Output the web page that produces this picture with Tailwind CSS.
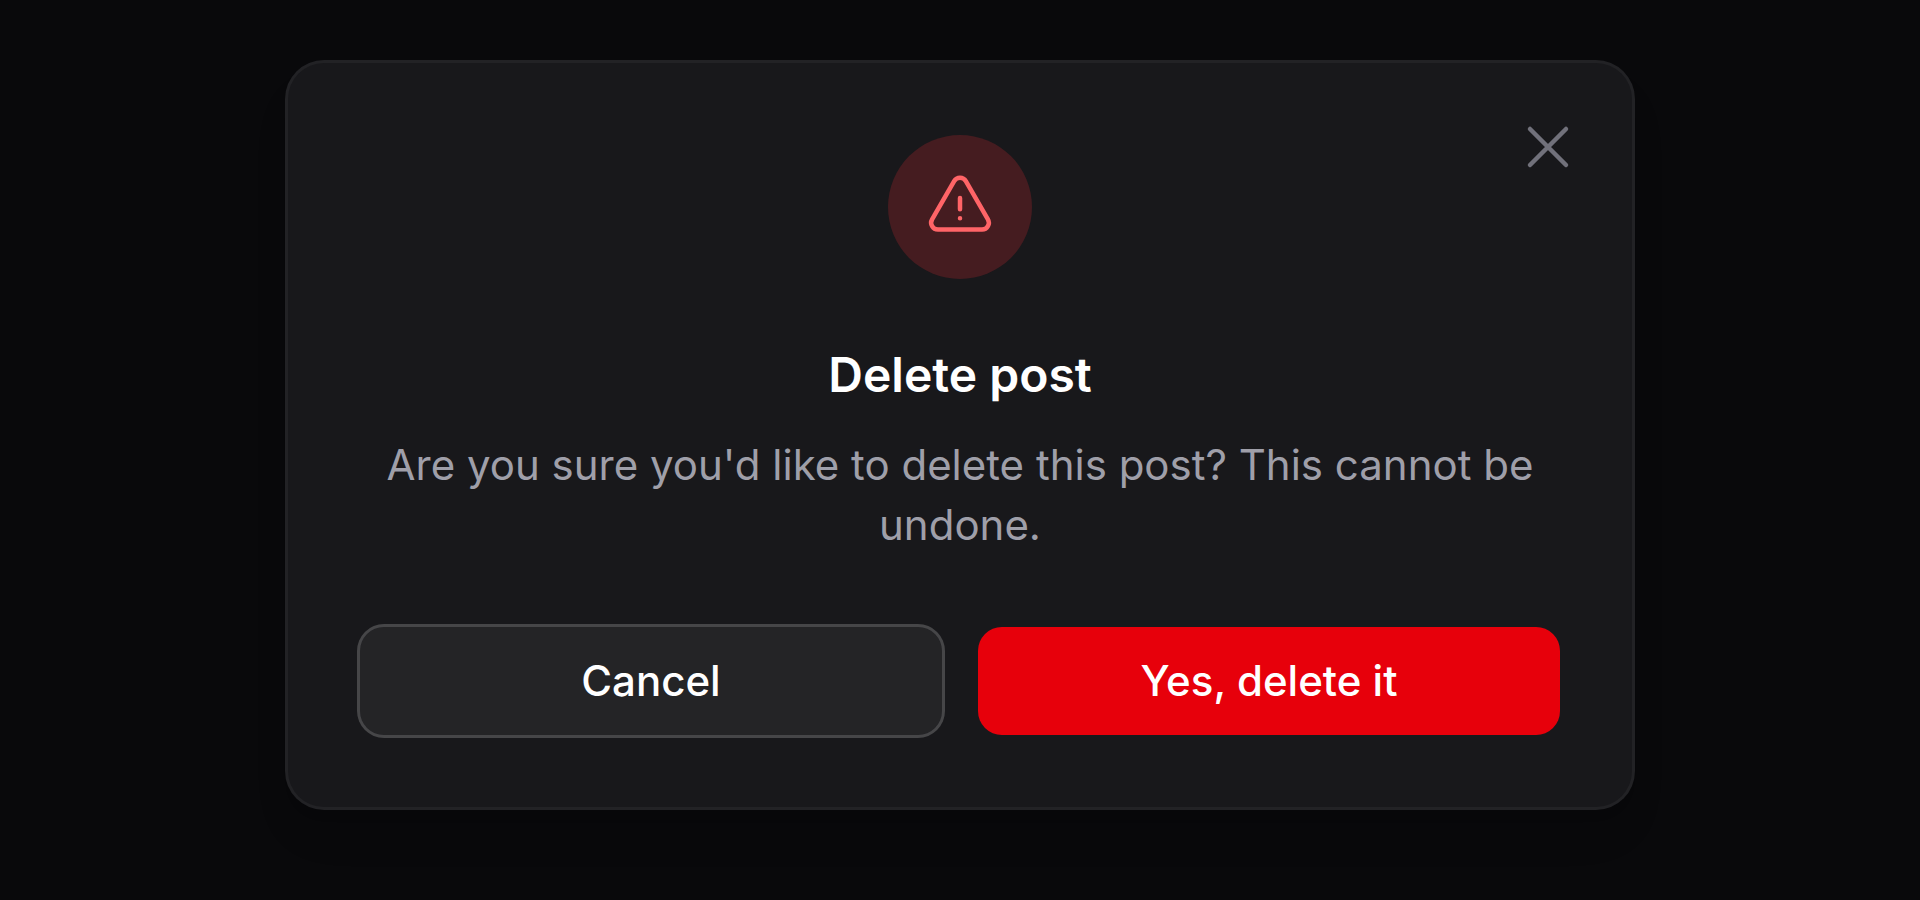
<!DOCTYPE html>
<html lang="en">
<head>
    <meta charset="UTF-8">
    <meta name="viewport" content="width=device-width, initial-scale=1.0">
    <title>Delete post</title>
    <script src="https://cdn.jsdelivr.net/npm/@tailwindcss/browser@4"></script>
</head>
<body class="min-h-screen bg-zinc-950 px-6 py-[63px] font-['Inter',sans-serif]">
    <!-- Modal -->
    <div role="dialog" aria-modal="true" aria-labelledby="modal-title" aria-describedby="modal-description" class="relative mx-auto max-w-[1344px] rounded-[36px] bg-zinc-900 p-18 shadow-[0_30px_45px_-9px_rgb(0_0_0/0.1),0_12px_18px_-12px_rgb(0_0_0/0.1)] ring-3 ring-[#222225]">
        <!-- Close button -->
        <button type="button" aria-label="Close" class="absolute top-12 right-12 text-zinc-500 hover:text-zinc-400">
            <svg class="size-18" fill="none" viewBox="0 0 24 24" stroke-width="1.5" stroke="currentColor" aria-hidden="true">
                <path stroke-linecap="round" stroke-linejoin="round" d="M6 18 18 6M6 6l12 12" />
            </svg>
        </button>

        <!-- Header -->
        <div class="flex flex-col items-center text-center">
            <div class="mb-15 rounded-full bg-red-500/20 p-9 text-red-400">
                <svg class="size-18" fill="none" viewBox="0 0 24 24" stroke-width="1.5" stroke="currentColor" aria-hidden="true">
                    <path stroke-linecap="round" stroke-linejoin="round" d="M12 9v3.75m-9.303 3.376c-.866 1.5.217 3.374 1.948 3.374h14.71c1.73 0 2.813-1.874 1.948-3.374L13.949 3.378c-.866-1.5-3.032-1.5-3.898 0L2.697 16.126ZM12 15.75h.007v.008H12v-.008Z" />
                </svg>
            </div>
            <h2 id="modal-title" class="text-5xl leading-18 font-semibold text-white">Delete post</h2>
            <p id="modal-description" class="mt-6 text-[42px] leading-15 text-zinc-400">Are you sure you'd like to delete this post? This cannot be undone.</p>
        </div>

        <!-- Footer actions -->
        <div class="mt-18 grid grid-cols-2 gap-9">
            <button type="button" class="rounded-3xl bg-white/5 py-6 text-[42px] leading-15 font-medium text-white ring-3 ring-white/20 hover:bg-white/10">Cancel</button>
            <button type="button" class="rounded-3xl bg-red-600 py-6 text-[42px] leading-15 font-medium text-white hover:bg-red-500">Yes, delete it</button>
        </div>
    </div>
</body>
</html>
